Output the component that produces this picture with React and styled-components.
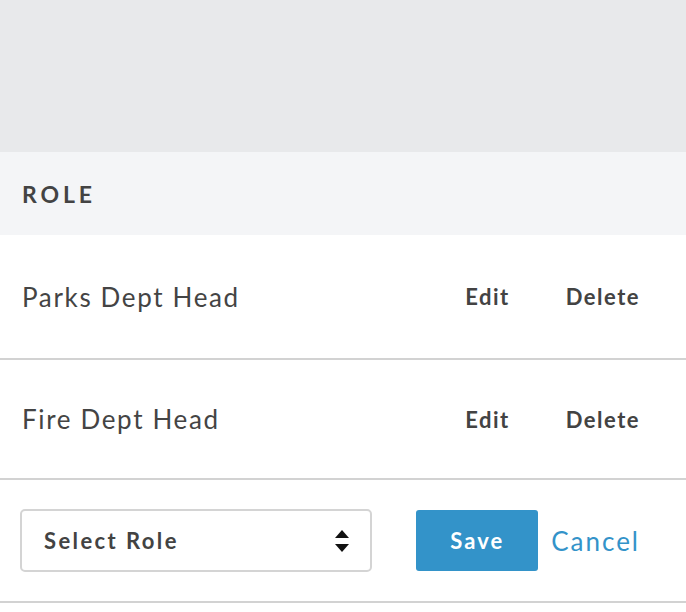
import React from "react";
import styled, { createGlobalStyle } from "styled-components";

const Global = createGlobalStyle`
  html, body { margin: 0; padding: 0; background: #fff; }
  body { font-family: "Lato", "Open Sans", sans-serif; color: #434343; }
`;

const Page = styled.div`
  width: 686px;
`;

const Banner = styled.div`
  height: 152px;
  background: #e8e9eb;
`;

const HeaderRow = styled.div`
  height: 83px;
  background: #f4f5f7;
  display: flex;
  align-items: center;
  padding-left: 22px;
  font-size: 23px;
  font-weight: 700;
  letter-spacing: 3.9px;
  color: #434343;
`;

const Row = styled.div`
  height: ${(p) => p.$h}px;
  border-bottom: 2px solid #d2d2d2;
  display: flex;
  align-items: center;
  padding: 0 46px 0 ${(p) => p.$pl || 22}px;
`;

const Name = styled.div`
  flex: 1;
  font-size: 26px;
  color: #444;
  letter-spacing: 1.65px;
`;

const Action = styled.button`
  background: none;
  border: none;
  padding: 0;
  font-family: inherit;
  font-size: 22px;
  font-weight: 700;
  color: #434343;
  letter-spacing: 1.5px;
  margin-left: ${(p) => p.$ml || 0}px;
  cursor: pointer;
`;

const SelectBox = styled.div`
  width: 353px;
  height: 63px;
  box-sizing: border-box;
  border: 2px solid #d4d4d4;
  border-radius: 5px;
  display: flex;
  align-items: center;
  justify-content: space-between;
  padding: 0 20px 0 22px;
  font-size: 22px;
  font-weight: 700;
  letter-spacing: 2.4px;
  color: #434343;
`;

const SaveButton = styled.button`
  width: 122px;
  height: 61px;
  margin-left: 44px;
  background: #3393c9;
  border: none;
  border-radius: 3px;
  color: #fff;
  font-family: inherit;
  font-size: 22px;
  font-weight: 700;
  letter-spacing: 2px;
`;

const CancelLink = styled.a`
  margin-left: 13px;
  color: #3393c9;
  font-size: 26px;
  letter-spacing: 2px;
  text-decoration: none;
`;

const Arrows = () => (
  <svg width="16" height="26" viewBox="0 0 16 26">
    <path d="M8 2 L15 10 H1 Z" fill="#111" />
    <path d="M1 16 H15 L8 24 Z" fill="#111" />
  </svg>
);

const roles = [
  { name: "Parks Dept Head", h: 123 },
  { name: "Fire Dept Head", h: 118 },
];

export default function App() {
  return (
    <Page>
      <Global />
      <Banner />
      <HeaderRow>ROLE</HeaderRow>
      {roles.map((r) => (
        <Row key={r.name} $h={r.h}>
          <Name>{r.name}</Name>
          <Action>Edit</Action>
          <Action $ml={56}>Delete</Action>
        </Row>
      ))}
      <Row $h={121} $pl={20}>
        <SelectBox>
          <span>Select Role</span>
          <Arrows />
        </SelectBox>
        <SaveButton>Save</SaveButton>
        <CancelLink href="#">Cancel</CancelLink>
      </Row>
    </Page>
  );
}
